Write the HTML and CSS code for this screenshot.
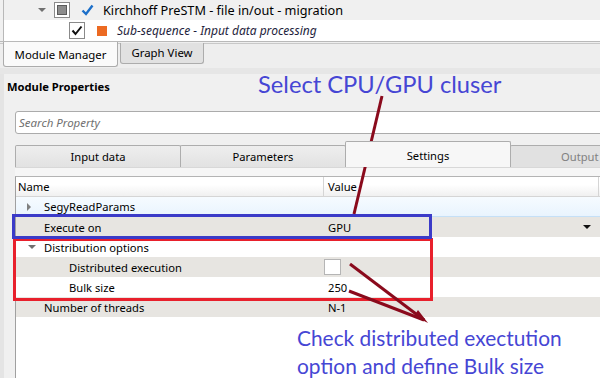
FILE: index.html
```html
<!DOCTYPE html>
<html>
<head>
<meta charset="utf-8">
<link rel="stylesheet" href="styles.css">
</head>
<body>
<div class="page">
  <div class="tree">
    <div class="trow r1">
      <span class="tri-down t1"></span>
      <span class="cb cb-part"><span class="fill"></span></span>
      <svg class="bcheck" width="13" height="12" viewBox="0 0 13 12"><path d="M1.5 6.5 L5 10 L11.5 1.5" fill="none" stroke="#1c6fc9" stroke-width="2.4"/></svg>
      <span class="lbl">Kirchhoff PreSTM - file in/out - migration</span>
    </div>
    <div class="trow r2">
      <span class="cb cb-on"><svg width="12" height="11" viewBox="0 0 12 11"><path d="M1.5 5.5 L4.5 9 L10.5 1.5" fill="none" stroke="#111" stroke-width="2"/></svg></span>
      <span class="orange"></span>
      <span class="lbl it">Sub-sequence - Input data processing</span>
    </div>
  </div>
  <div class="mtabs">
    <div class="mtab active">Module Manager</div>
    <div class="mtab">Graph View</div>
  </div>
  <div class="strip"></div>
  <div class="panel">
    <div class="ptitle">Module Properties</div>
    <div class="search">Search Property</div>
    <div class="ptabs">
      <div class="ptab">Input data</div>
      <div class="ptab">Parameters</div>
      <div class="ptab active">Settings</div>
      <div class="ptab dim">Output</div>
    </div>
    <div class="pane">
      <div class="grid">
        <div class="hdr"><div class="c1">Name</div><div class="c2">Value</div><div class="c3"></div></div>
        <div class="row blue"><div class="c1"><span class="tri-right"></span>SegyReadParams</div><div class="c2"></div></div>
        <div class="row alt"><div class="c1 ind1">Execute on</div><div class="c2">GPU</div><span class="dd"></span></div>
        <div class="row"><div class="c1"><span class="tri-down t2"></span>Distribution options</div><div class="c2"></div></div>
        <div class="row alt"><div class="c1 ind2">Distributed execution</div><div class="c2"><span class="vcb"></span></div></div>
        <div class="row"><div class="c1 ind2">Bulk size</div><div class="c2">250</div></div>
        <div class="row alt"><div class="c1 ind1">Number of threads</div><div class="c2">N-1</div></div>
      </div>
    </div>
  </div>

  <svg class="overlay" width="600" height="378" viewBox="0 0 600 378">
    <rect x="14.5" y="239.5" width="417" height="60" fill="none" stroke="#e8202c" stroke-width="3"/>
    <rect x="13.5" y="215.5" width="417" height="22" fill="none" stroke="#3b3bc8" stroke-width="3"/>
    <line x1="382" y1="96" x2="354" y2="214" stroke="#8a0a1c" stroke-width="3"/>
    <line x1="350" y1="264" x2="424" y2="320" stroke="#8a0a1c" stroke-width="3"/>
    <line x1="349" y1="291" x2="424" y2="320" stroke="#8a0a1c" stroke-width="3"/>
    <polygon points="428,323 414,316 418,310" fill="#8a0a1c"/>
  </svg>
  <div class="note n1">Select CPU/GPU cluser</div>
  <div class="note n2">Check distributed exectution<br>option and define Bulk size</div>
</div>
</body>
</html>
```

FILE: styles.css
```css
* { box-sizing: border-box; }
html, body { margin: 0; padding: 0; }
body {
  width: 600px;
  height: 378px;
  overflow: hidden;
  background: #f0f0f0;
  font-family: "Noto Sans", "DejaVu Sans", sans-serif;
  font-size: 11.2px;
  color: #000;
}
.page { position: relative; width: 600px; height: 378px; overflow: hidden; }

/* top tree */
.tree {
  margin-left: 3px;
  border-left: 1px solid #b8b8b8;
  height: 41px;
}
.trow { display: flex; align-items: center; white-space: nowrap; }
.r1 { height: 20px; background: #f0f0f0; }
.r2 { height: 21px; background: #fff; }
.lbl { line-height: 16px; }
.r1 .lbl { font-size: 12.7px; margin-left: 9px; }
.it { font-style: italic; color: #1e1e3c; font-size: 12px; }
.tri-down {
  width: 0; height: 0;
  border-left: 4px solid transparent;
  border-right: 4px solid transparent;
  border-top: 4px solid #707070;
}
.t1 { margin-left: 34px; }
.cb {
  width: 16px; height: 16px;
  border: 1px solid #8a8a8a;
  background: #fff;
  display: flex; align-items: center; justify-content: center;
}
.cb-part { margin-left: 8px; }
.cb-part .fill { width: 10px; height: 10px; background: #8c8c8c; border: 1px solid #5a5a5a; }
.bcheck { margin-left: 11px; }
.cb-on { margin-left: 65px; height: 17px; }
.orange { width: 10px; height: 10px; background: #ec6a22; margin-left: 12px; }
.r2 .lbl { margin-left: 10px; }

/* module tabs */
.mtabs {
  display: flex;
  align-items: flex-start;
  height: 27px;
  border-top: 1px solid #b9b9b9;
  background: #eeeeee;
  padding-left: 3px;
  position: relative;
  font-size: 11.4px;
}
.mtabs::before {
  content: "";
  position: absolute;
  left: 0; right: 0; top: 1px;
  border-top: 1px solid #c8c8c8;
}
.mtab {
  position: relative;
  border: 1px solid #acacac;
  border-top: none;
  background: #e1e1e1;
  height: 21px;
  line-height: 19px;
  text-align: center;
  margin-top: 1px;
}
.mtab:nth-child(2) { width: 84px; margin-left: 2px; border-radius: 0 0 3px 3px; }
.mtab.active {
  width: 115px;
  height: 25px;
  margin-top: 0;
  background: #fafafa;
  line-height: 25px;
  border-radius: 0 0 3px 3px;
  z-index: 1;
}

.strip { height: 6px; background: #e6e6e6; }

/* panel */
.panel {
  margin-left: 4px;
  background: #f0f0f0;
  height: 310px;
  padding-left: 11px;
  padding-top: 5px;
  position: relative;
}
.page::before {
  content: "";
  position: absolute;
  left: 0; top: 74px; width: 4px; height: 304px;
  background: #e4e4e4;
}
.ptitle {
  font-weight: bold;
  line-height: 16px;
  margin-left: -8px;
  font-size: 11.2px;
}
.search {
  margin-top: 16px;
  height: 23px;
  width: 600px;
  border: 1px solid #ababab;
  border-radius: 3px;
  background: #fff;
  font-style: italic;
  font-size: 11.5px;
  color: #707070;
  line-height: 21px;
  padding-left: 3px;
}
.ptabs {
  display: flex;
  align-items: flex-end;
  height: 25px;
  margin-top: 8px;
  white-space: nowrap;
}
.ptab {
  width: 166px;
  flex: none;
  height: 22px;
  line-height: 21px;
  text-align: center;
  border: 1px solid #adadad;
  border-bottom: none;
  border-radius: 2px 2px 0 0;
  background: linear-gradient(#eeeeee, #e2e2e2);
  margin-right: -1px;
}
.ptab.active {
  height: 26px;
  line-height: 27px;
  background: #f7f7f7;
  position: relative;
  z-index: 1;
}
.ptab.dim { color: #808080; background: #e1e1e1; text-align: left; padding-left: 50px; }
.pane {
  background: #f6f6f6;
  border-top: 1px solid #d8d8d8;
  padding-top: 8px;
  height: 220px;
  width: 585px;
}
.grid {
  background: #fff;
  border-left: 1px solid #a0a0a0;
  border-top: 1px solid #b4b4b4;
  height: 220px;
}
.hdr {
  display: flex;
  height: 20px;
  background: linear-gradient(#ffffff 40%, #f0f0f0);
  border-bottom: 1px solid #d5d5d5;
  line-height: 19px;
}
.hdr .c1 { width: 308px; border-right: 1px solid #d5d5d5; padding-left: 2px; }
.hdr .c2 { width: 275px; border-right: 1px solid #d5d5d5; padding-left: 4px; }
.row {
  display: flex;
  align-items: center;
  height: 20px;
  position: relative;
  white-space: nowrap;
}
.row.alt { background: #e7e5e1; }
.row.blue {
  background: linear-gradient(#f6fbff, #e9f4fe);
  border-bottom: 1px solid #c5e0f7;
}
.row .c1 { width: 308px; display: flex; align-items: center; padding-left: 28px; }
.row .c2 { padding-left: 4px; display: flex; align-items: center; }
.ind1 { padding-left: 28px; }
.row .c1.ind2 { padding-left: 53px; }
.tri-right {
  width: 0; height: 0;
  border-top: 4px solid transparent;
  border-bottom: 4px solid transparent;
  border-left: 4px solid #808080;
  margin-left: -17px;
  margin-right: 13px;
}
.t2 { margin-left: -16px; margin-right: 8px; }
.dd {
  position: absolute;
  right: 9px;
  top: 8px;
  width: 0; height: 0;
  border-left: 4px solid transparent;
  border-right: 4px solid transparent;
  border-top: 4px solid #111;
}
.vcb {
  width: 17px; height: 16px;
  border: 1px solid #b5b5b5;
  background: #fff;
  margin-left: -4px;
}

/* annotations */
.overlay { position: absolute; left: 0; top: 0; pointer-events: none; }
.note {
  position: absolute;
  font-family: Lato, "Noto Sans", sans-serif;
  color: #4646d4;
  white-space: nowrap;
}
.n1 { left: 258px; top: 70px; font-size: 23.7px; line-height: 28px; }
.n2 { left: 297px; top: 324px; font-size: 20.9px; line-height: 28px; }
```
